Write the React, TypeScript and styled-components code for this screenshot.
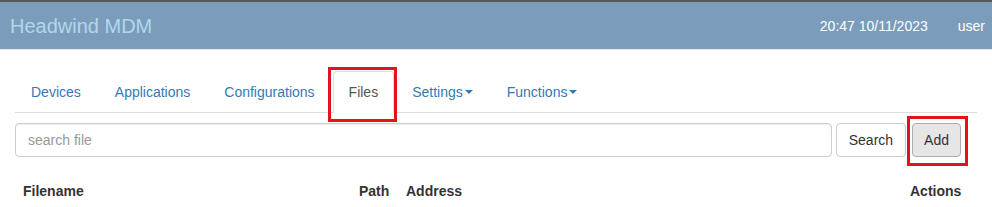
import React from 'react';
import styled, { createGlobalStyle } from 'styled-components';

const GlobalStyle = createGlobalStyle`
  html, body {
    margin: 0;
    padding: 0;
    background: #fff;
  }
  body {
    font-family: "Liberation Sans", Arial, sans-serif;
    font-size: 14px;
    line-height: 20px;
    color: #333;
  }
  * {
    box-sizing: border-box;
  }
`;

const tabs = ['Devices', 'Applications', 'Configurations', 'Files', 'Settings', 'Functions'];
const dropdowns = ['Settings', 'Functions'];

export default function App() {
  return (
    <Page>
      <GlobalStyle />
      <Navbar>
        <Brand>Headwind MDM</Brand>
        <NavRight>
          <Clock>20:47 10/11/2023</Clock>
          <UserName>user</UserName>
        </NavRight>
      </Navbar>

      <Main>
        <TabList>
          {tabs.map((t) => (
            <TabItem key={t}>
              <TabLink active={t === 'Files'}>
                {t}
                {dropdowns.includes(t) && <Caret />}
              </TabLink>
              {t === 'Files' && <Highlight style={{ left: -5, top: -4, width: 69, height: 55 }} />}
            </TabItem>
          ))}
        </TabList>

        <SearchRow>
          <SearchInput placeholder="search file" />
          <Button>Search</Button>
          <ButtonWrap>
            <Button pressed>Add</Button>
            <Highlight style={{ left: -5, top: -7, width: 61, height: 50 }} />
          </ButtonWrap>
        </SearchRow>

        <Table>
          <thead>
            <tr>
              <Th width={336}>Filename</Th>
              <Th width={47}>Path</Th>
              <Th>Address</Th>
              <Th width={67}>Actions</Th>
            </tr>
          </thead>
        </Table>
      </Main>
    </Page>
  );
}

const Page = styled.div`
  width: 100%;
`;

const Navbar = styled.div`
  display: flex;
  align-items: center;
  justify-content: space-between;
  height: 50px;
  padding: 0 7px 0 10px;
  background: #7b9cbb;
  border-top: 2px solid #5a5a5a;
  border-bottom: 1px solid #e7e7e7;
`;

const Brand = styled.div`
  font-size: 20px;
  line-height: 24px;
  color: #b1d7ec;
`;

const NavRight = styled.div`
  display: flex;
  align-items: center;
  gap: 30px;
  color: #fff;
  font-size: 14px;
`;

const Clock = styled.span``;

const UserName = styled.span``;

const Main = styled.div`
  padding: 21px 15px 0;
`;

const TabList = styled.ul`
  display: flex;
  margin: 0;
  padding: 0;
  list-style: none;
  border-bottom: 1px solid #ddd;
`;

const TabItem = styled.li`
  position: relative;
  margin-bottom: -1px;
`;

const TabLink = styled.a<{ active?: boolean }>`
  display: flex;
  align-items: center;
  padding: 10px 15px;
  margin-right: 2px;
  line-height: 20px;
  border: 1px solid transparent;
  border-radius: 4px 4px 0 0;
  color: #337ab7;
  cursor: pointer;
  ${({ active }) =>
    active
      ? `
    color: #555;
    background: #fff;
    border-color: #ddd #ddd transparent;
  `
      : ''}
`;

const Caret = styled.span`
  display: inline-block;
  width: 0;
  height: 0;
  margin-left: 2px;
  border-top: 4px solid #337ab7;
  border-left: 4px solid transparent;
  border-right: 4px solid transparent;
`;

const Highlight = styled.div`
  position: absolute;
  border: 3px solid #e3121d;
  pointer-events: none;
`;

const SearchRow = styled.div`
  display: flex;
  align-items: center;
  gap: 4px;
  margin-top: 10px;
  padding-right: 16px;
`;

const SearchInput = styled.input`
  flex: 1;
  height: 34px;
  padding: 6px 12px;
  font-family: inherit;
  font-size: 14px;
  line-height: 20px;
  color: #555;
  border: 1px solid #ccc;
  border-radius: 4px;
  box-shadow: inset 0 1px 1px rgba(0, 0, 0, 0.075);
  outline: none;
  &::placeholder {
    color: #999;
  }
`;

const ButtonWrap = styled.div`
  position: relative;
  margin-left: 2px;
`;

const Button = styled.button<{ pressed?: boolean }>`
  height: 34px;
  padding: 6px ${({ pressed }) => (pressed ? '11px' : '12px')};
  font-family: inherit;
  font-size: 14px;
  line-height: 20px;
  color: #333;
  background: ${({ pressed }) => (pressed ? '#e6e6e6' : '#fff')};
  border: 1px solid ${({ pressed }) => (pressed ? '#adadad' : '#ccc')};
  border-radius: 4px;
  cursor: pointer;
`;

const Table = styled.table`
  width: calc(100% - 8px);
  margin-top: 16px;
  border-collapse: collapse;
  table-layout: fixed;
`;

const Th = styled.th<{ width?: number }>`
  ${({ width }) => (width ? `width: ${width}px;` : '')}
  padding: 8px;
  text-align: left;
  font-weight: bold;
  color: #333;
  line-height: 20px;
`;
